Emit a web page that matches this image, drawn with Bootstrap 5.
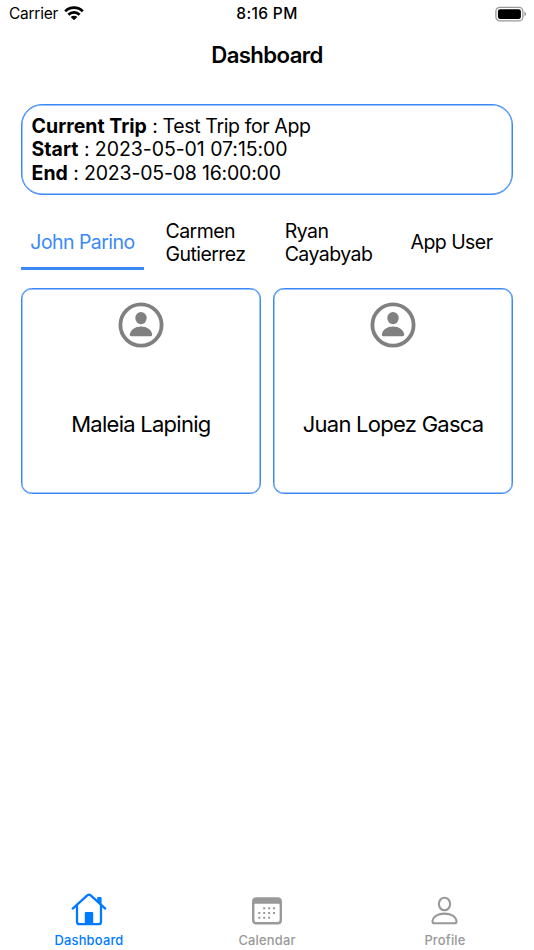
<!DOCTYPE html>
<html lang="en">
<head>
<meta charset="utf-8">
<meta name="viewport" content="width=device-width, initial-scale=1">
<title>Dashboard</title>
<link href="https://cdn.jsdelivr.net/npm/bootstrap@5.3.0/dist/css/bootstrap.min.css" rel="stylesheet">
<style>
body{font-family:Inter,"Liberation Sans",sans-serif;color:#000;background:#fff}
svg{display:block}
.phone{height:950px;overflow:hidden}
.status-bar{height:28px;font-size:15.5px;line-height:28px;padding-left:9px;padding-right:7px}
.carrier{letter-spacing:-.25px}
.carrier + svg{margin-left:5px}
.clock{font-weight:500;letter-spacing:.35px;padding-right:2px}
.screen-title{height:54px;line-height:54px;font-size:22.2px;font-weight:600;letter-spacing:-.62px}
.main-area{padding:0 21px}
.trip{margin-top:21.5px;height:91.5px;border:1px solid #3b89f7;box-shadow:inset 0 0 0 .5px #3b89f7;border-radius:21px;padding:10px 9.6px;font-size:19.5px;line-height:23.6px}
.trip b{font-weight:700}
.trip-name{letter-spacing:-.38px}
.trip-start{letter-spacing:-.06px}
.trip-end{letter-spacing:-.2px}
.people{height:56px;margin-top:19px;font-size:19.5px;line-height:23px;letter-spacing:-.55px}
.person{height:56px;border-bottom:3px solid transparent;padding-top:3px}
.person.active{color:#3b89f7;border-color:#3b89f7}
.person span{padding-top:1px}
.members{display:grid;grid-template-columns:1fr 1fr;gap:12.4px;margin-top:18px}
.member{height:206px;border:1px solid #3b89f7;box-shadow:inset 0 0 0 .5px #3b89f7;border-radius:10.5px;padding-top:12.5px}
.member-name{margin-top:59px;font-size:22px;line-height:34px;letter-spacing:-.74px}
.tabs-bottom{height:60px;font-size:12.9px;font-weight:500;line-height:16px;letter-spacing:.2px;color:#999}
.tabs-bottom svg{margin-bottom:4.5px}
.tabs-bottom .on{color:#007aff}
</style>
</head>
<body>
<div class="phone d-flex flex-column">
<header>
<div class="status-bar row g-0 align-items-center">
<div class="col d-flex align-items-center"><span class="carrier">Carrier</span>
<svg width="22" height="18" viewBox="0 0 22 18" fill="none" stroke="#000" stroke-width="2.8"><path d="M2.2 6.400a12.200 12.200 0 0 1 17.600 0M5.400 9.800a7.800 7.800 0 0 1 11.200 0"/><path d="M11 15.300 7.700 12.100a4.500 4.500 0 0 1 6.600 0Z" fill="#000" stroke="none"/></svg></div>
<div class="col text-center clock">8:16 PM</div>
<div class="col d-flex justify-content-end"><svg width="32" height="16" viewBox="0 0 32 16"><rect x=".9" y="1.300" width="27" height="13.600" rx="4" fill="none" stroke="#999" stroke-width="1.300"/><rect x="2.900" y="3.300" width="23" height="9.600" rx="2.200"/><path d="M29.500 5.600q3 2.500 0 5Z" fill="#888"/></svg></div>
</div>
<h1 class="screen-title text-center m-0">Dashboard</h1>
</header>
<main class="main-area flex-grow-1">
<section class="trip">
<div><b>Current Trip</b> <span class="trip-name">: Test Trip for App</span></div>
<div><b>Start</b> <span class="trip-start">: 2023-05-01 07:15:00</span></div>
<div><b>End</b> <span class="trip-end">: 2023-05-08 16:00:00</span></div>
</section>
<div class="people row g-0">
<div class="col person active d-flex align-items-center justify-content-center">John Parino</div>
<div class="col person d-flex align-items-center justify-content-center"><span>Carmen<br>Gutierrez</span></div>
<div class="col person d-flex align-items-center justify-content-center"><span>Ryan<br>Cayabyab</span></div>
<div class="col person d-flex align-items-center justify-content-center">App User</div>
</div>
<div class="members">
<div class="member text-center"><svg class="mx-auto" width="46" height="46" viewBox="0 0 46 46" fill="#808080"><circle cx="23" cy="23" r="20.600" fill="none" stroke="#808080" stroke-width="3.800"/><ellipse cx="23" cy="16.100" rx="5.700" ry="6.200"/><path d="M13.200 34.200q-1.600 0-1.400-1.600c.7-5 5.500-8.100 11.200-8.100s10.500 3.100 11.200 8.100q.2 1.600-1.400 1.600Z"/></svg><div class="member-name">Maleia Lapinig</div></div>
<div class="member text-center"><svg class="mx-auto" width="46" height="46" viewBox="0 0 46 46" fill="#808080"><circle cx="23" cy="23" r="20.600" fill="none" stroke="#808080" stroke-width="3.800"/><ellipse cx="23" cy="16.100" rx="5.700" ry="6.200"/><path d="M13.200 34.200q-1.600 0-1.400-1.600c.7-5 5.500-8.100 11.200-8.100s10.500 3.100 11.200 8.100q.2 1.600-1.400 1.600Z"/></svg><div class="member-name">Juan Lopez Gasca</div></div>
</div>
</main>
<nav class="tabs-bottom row g-0 text-center">
<div class="col on"><svg class="mx-auto" width="38" height="38" viewBox="0 0 38 38" fill="none" stroke="#007aff" stroke-width="2.300" stroke-linecap="round" stroke-linejoin="round"><path d="M2.700 18.600 17.300 5.400q1.700-1.400 3.400 0L35.300 18.600M7 15.500v16.200q0 2.500 2.500 2.500h19q2.500 0 2.500-2.500V15.500"/><path d="M28.300 12V8h2.200v6" stroke-width="2.200"/><path d="M14.800 34V23q0-1 1-1h6.400q1 0 1 1v11Z" fill="#007aff" stroke="none"/></svg>Dashboard</div>
<div class="col"><svg class="mx-auto" width="38" height="38" viewBox="0 0 38 38" fill="#999"><path fill-rule="evenodd" d="M8.500 7.200h21q4.500 0 4.500 4.500v18.200q0 4.500-4.500 4.500h-21Q4 34.400 4 29.900V11.700q0-4.500 4.500-4.500ZM6.400 14.800v15.100q0 2.200 2.200 2.200h20.800q2.200 0 2.200-2.200V14.800q0-1-1-1H7.400q-1 0-1 1Z"/><path d="M15.200 17.300h2v2h-2zm4.900 0h2v2h-2zm4.900 0h2v2h-2zM10.300 22h2v2h-2zm4.900 0h2v2h-2zm4.900 0h2v2h-2zm4.900 0h2v2h-2zM10.300 26.700h2v2h-2zm4.900 0h2v2h-2zm4.900 0h2v2h-2z"/></svg>Calendar</div>
<div class="col"><svg class="mx-auto" width="38" height="38" viewBox="0 0 38 38" fill="none" stroke="#999" stroke-width="2.100"><ellipse cx="18.500" cy="14" rx="5.600" ry="6.300"/><path d="M8.300 33.200q-2 0-1.800-2C7.200 26.500 12 23.600 18.500 23.600s11.300 2.900 12 7.600q.2 2-1.800 2Z"/></svg>Profile</div>
</nav>
</div>
<script src="https://cdn.jsdelivr.net/npm/bootstrap@5.3.0/dist/js/bootstrap.bundle.min.js"></script>
</body>
</html>
